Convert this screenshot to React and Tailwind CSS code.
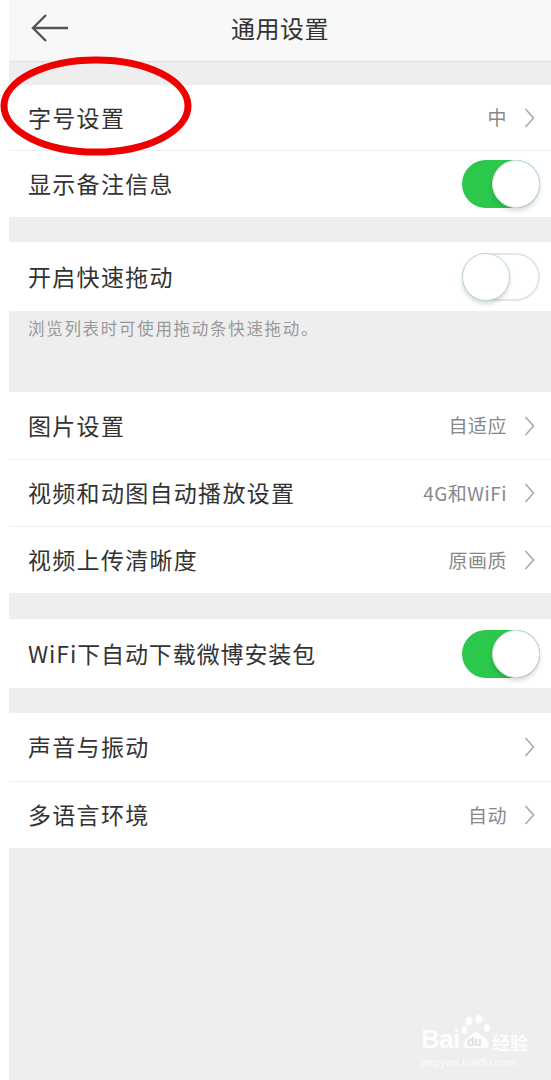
import React from 'react'

const font = { fontFamily: '"Noto Sans CJK SC", "Noto Sans", sans-serif' }
const latin = { fontFamily: '"Liberation Sans", Arial, sans-serif' }

function Chevron() {
  return (
    <svg width="11" height="20" viewBox="0 0 11 20" className="ml-[17px] shrink-0">
      <path d="M1.5 1 L9.5 10 L1.5 19" fill="none" stroke="#a9a9a9" strokeWidth="1.6" />
    </svg>
  )
}

function Toggle({ on }) {
  if (on) {
    return (
      <div className="relative w-[78px] h-[48px] rounded-full bg-[#2bc84b]">
        <div className="absolute right-0 top-0 w-[48px] h-[48px] rounded-full bg-white border border-[#dcdcdc] shadow-[0_3px_4px_rgba(0,0,0,0.15)]" />
      </div>
    )
  }
  return (
    <div className="relative w-[78px] h-[48px] rounded-full bg-white border-2 border-[#e6e6e6]">
      <div className="absolute -left-[2px] -top-[2px] w-[48px] h-[48px] rounded-full bg-white border border-[#b9dcbc] shadow-[0_3px_4px_rgba(0,0,0,0.15)]" />
    </div>
  )
}

function Row({ label, value, toggle, chevron, first, h = 'h-[67px]', track = 'tracking-[1.3px]' }) {
  return (
    <div
      className={
        h + ' shrink-0 flex items-center pl-[19px] pr-[16px] bg-white ' +
        (first ? '' : 'border-t border-[#efefef]')
      }
    >
      <span className={'flex-1 text-[23px] text-[#333] -mt-[1px] ' + track}>{label}</span>
      {value && <span className="text-[19px] tracking-[0.5px] text-[#888]">{value}</span>}
      {chevron && <Chevron />}
      {toggle !== undefined && <div className="mr-[-5px]"><Toggle on={toggle} /></div>}
    </div>
  )
}

function Watermark() {
  return (
    <div className="absolute left-[421px] top-[1014px] flex flex-col items-start text-white opacity-90 select-none">
      <div className="flex items-end leading-none">
        <span className="text-[26px] font-bold tracking-[-0.5px]" style={latin}>Bai</span>
        <div className="relative w-[30px] h-[38px] mx-[1px]">
          <svg width="30" height="38" viewBox="0 0 30 38" className="absolute inset-0">
            <ellipse cx="8" cy="7" rx="3.5" ry="4.5" fill="#fff" />
            <ellipse cx="18" cy="5" rx="3.5" ry="4.5" fill="#fff" />
            <ellipse cx="3.5" cy="16" rx="3" ry="4" fill="#fff" />
            <ellipse cx="26" cy="14" rx="3" ry="4" fill="#fff" />
            <path d="M5 34 C1 34 1 27 8 23 C11 20 13 18 15 18 C18 18 20 21 23 23 C29 27 29 34 25 34 Z" fill="#fff" />
          </svg>
          <span className="absolute left-[6px] bottom-[4px] text-[12px] font-bold text-[#dcdcdc]" style={latin}>du</span>
        </div>
        <span className="text-[18px] font-bold mb-[1px]" style={font}>经验</span>
      </div>
      <span className="text-[11.5px] mt-[2px] tracking-[0.2px]" style={latin}>jingyan.baidu.com</span>
    </div>
  )
}

export default function App() {
  return (
    <div className="relative w-[551px] h-[1080px] bg-white pl-[9px] overflow-hidden" style={font}>
      <div className="h-full flex flex-col bg-[#eeeeee]">
        {/* header */}
        <div className="h-[62px] shrink-0 relative flex items-center justify-center bg-[#f8f8f8] border-b border-[#e2e2e2]">
          <svg width="40" height="32" viewBox="0 0 40 32" className="absolute left-[21px] top-[12px]">
            <path d="M38 16 H4 M16 3 L3 16 L16 29" fill="none" stroke="#555" strokeWidth="2.4" />
          </svg>
          <span className="text-[24px] tracking-[0.5px] text-[#333] -mt-[5px]">通用设置</span>
        </div>

        <div className="h-[23px] shrink-0" />
        <Row first label="字号设置" value="中" chevron h="h-[65px]" />
        <Row label="显示备注信息" toggle={true} />

        <div className="h-[25px] shrink-0" />
        <Row first label="开启快速拖动" toggle={false} h="h-[69px]" />
        <div className="h-[81px] shrink-0 pl-[19px] pt-[5px]">
          <span className="text-[16.5px] tracking-[1.7px] text-[#999]">浏览列表时可使用拖动条快速拖动。</span>
        </div>

        <Row first label="图片设置" value="自适应" chevron />
        <Row label="视频和动图自动播放设置" value="4G和WiFi" chevron />
        <Row label="视频上传清晰度" value="原画质" chevron />

        <div className="h-[26px] shrink-0" />
        <Row first label="WiFi下自动下载微博安装包" toggle={true} h="h-[69px]" track="tracking-[0.9px]" />

        <div className="h-[25px] shrink-0" />
        <Row first label="声音与振动" chevron h="h-[68px]" />
        <Row label="多语言环境" value="自动" chevron />
      </div>

      {/* red annotation */}
      <svg width="200" height="110" viewBox="0 0 200 110" className="absolute left-0 top-[52px] pointer-events-none">
        <ellipse cx="96" cy="54" rx="92" ry="46" fill="none" stroke="#ee0000" strokeWidth="7" />
      </svg>

      <Watermark />
    </div>
  )
}
